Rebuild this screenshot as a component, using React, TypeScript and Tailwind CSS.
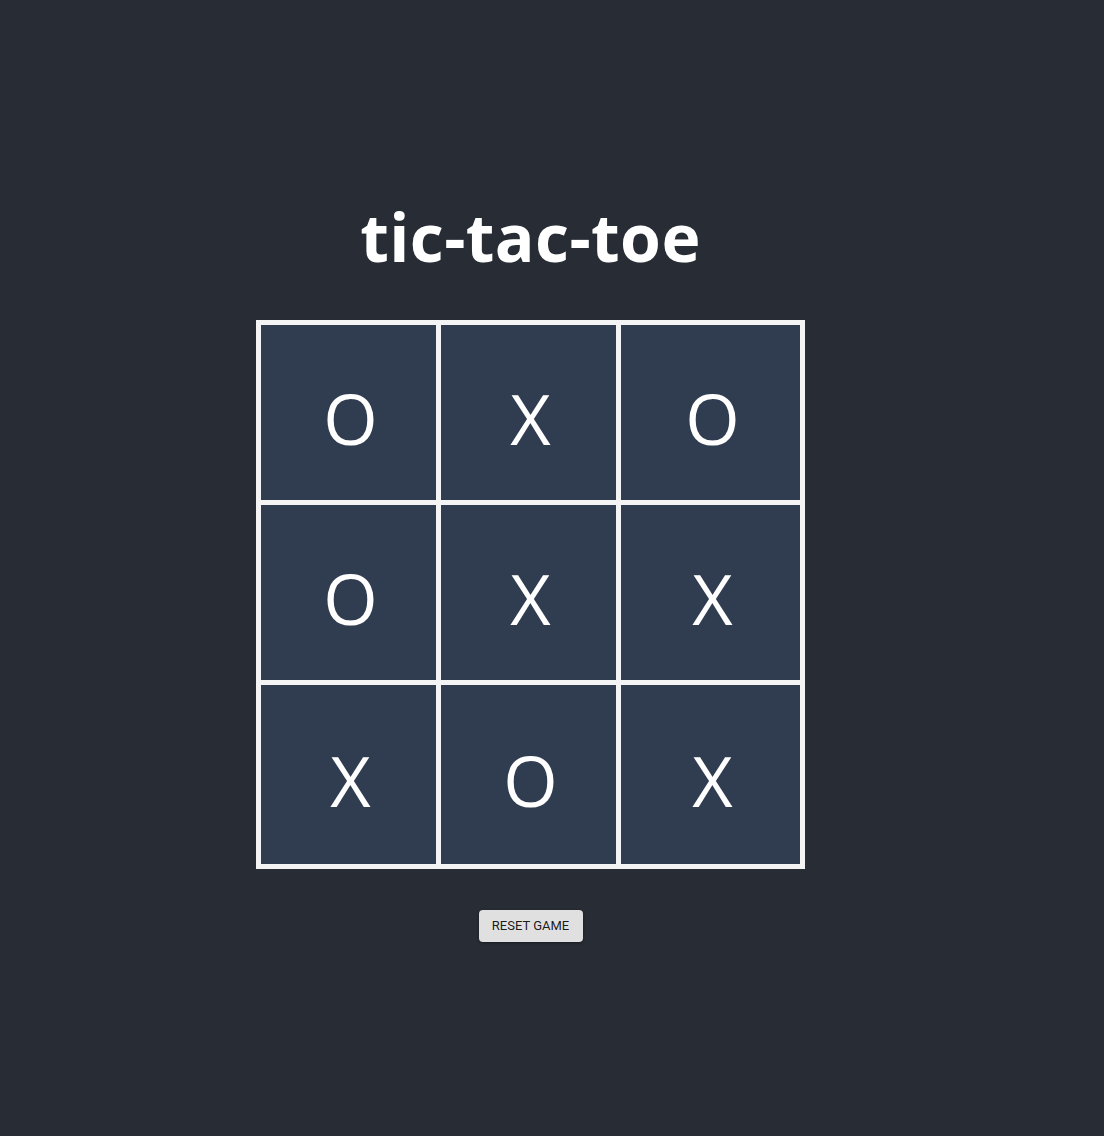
const board = ["O", "X", "O", "O", "X", "X", "X", "O", "X"];

export default function App() {
  return (
    <div className="min-h-[1136px] w-full bg-[#282c34]">
      <div className="w-[1061px] flex flex-col items-center pt-[196px]">
        <h1 className="text-[66px] leading-[80px] font-bold text-white font-['Open_Sans',sans-serif] tracking-[0.4px]">
          tic-tac-toe
        </h1>
        <div className="mt-[44px] grid grid-cols-[175px_175px_179px] grid-rows-[175px_175px_179px] gap-[5px] p-[5px] bg-[#f4f4f4]">
          {board.map((v, i) => (
            <div
              key={i}
              className="bg-[#303d50] flex items-center justify-center pt-[10px] pl-[4px] text-white text-[70px] font-['Open_Sans',sans-serif] leading-none"
            >
              {v}
            </div>
          ))}
        </div>
        <button className="mt-[41px] w-[104px] h-[32px] rounded bg-[#e0e0e0] text-[13px] text-black/90 font-['Roboto',sans-serif] uppercase shadow-[0_1px_3px_rgba(0,0,0,0.4)]">
          Reset Game
        </button>
      </div>
    </div>
  );
}
